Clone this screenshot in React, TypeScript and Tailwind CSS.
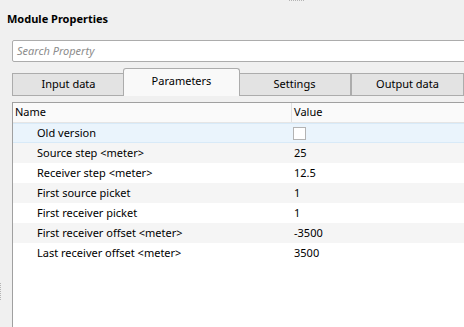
import React from 'react';

const rows = [
  { name: 'Old version', value: null },
  { name: 'Source step <meter>', value: '25' },
  { name: 'Receiver step <meter>', value: '12.5' },
  { name: 'First source picket', value: '1' },
  { name: 'First receiver picket', value: '1' },
  { name: 'First receiver offset <meter>', value: '-3500' },
  { name: 'Last receiver offset <meter>', value: '3500' },
];

const tabs = ['Input data', 'Parameters', 'Settings', 'Output data'];

export default function App() {
  return (
    <div className="relative w-[464px] h-[327px] overflow-hidden bg-[#f0f0f0] text-[11px] text-black font-['Noto_Sans',sans-serif]">
      {/* splitter grips */}
      <div className="absolute top-0 left-[289px] w-[15px] h-[2px] border-t border-dotted border-[#b5b5b5]" />
      <div className="absolute left-0 top-[283px] w-[2px] h-[17px] border-l border-dotted border-[#b5b5b5]" />

      {/* Title */}
      <div className="h-[40px] pl-[7px] pt-[11px] font-bold leading-[16px]">Module Properties</div>

      {/* Search */}
      <div className="ml-[12px] mr-[-6px] h-[22px] border border-[#acacac] rounded-[2px] bg-white flex items-center pl-[4px]">
        <span className="italic text-[#8c8c8c]">Search Property</span>
      </div>

      {/* Tabs */}
      <div className="mt-[7px] ml-[12px] h-[27px] flex items-end">
        {tabs.map((t, i) =>
          i === 1 ? (
            <div
              key={t}
              className="relative z-10 -mx-[2px] w-[117px] h-[28px] bg-[#f9f9f9] border border-b-0 border-[#acacac] rounded-t-[3px] flex items-center justify-center pb-[2px]"
            >
              {t}
            </div>
          ) : (
            <div
              key={t}
              className="w-[113px] h-[23px] shrink-0 bg-[#e3e3e3] border border-[#acacac] flex items-center justify-center"
            >
              {t}
            </div>
          )
        )}
      </div>

      {/* Table */}
      <div className="mt-[6px] ml-[12px] h-[300px] bg-white border-l border-t border-[#a0a0a0]">
        <div className="flex h-[20px] bg-[#fafafa] border-b border-[#e5e5e5] items-center">
          <div className="w-[279px] pl-[2px] border-r border-[#e0e0e0] h-full flex items-center">Name</div>
          <div className="pl-[2px]">Value</div>
        </div>
        {rows.map((r, i) => (
          <div
            key={r.name}
            className={`flex h-[20px] items-center ${
              i === 0 ? 'bg-[#eaf4fc] border-y border-[#d8eaf8]' : i % 2 === 1 ? 'bg-[#f5f5f5]' : 'bg-white'
            }`}
          >
            <div className="w-[281px] pl-[24px]">{r.name}</div>
            <div>
              {r.value === null ? (
                <div className="-ml-[1px] w-[13px] h-[13px] bg-white border border-[#b3b3b3]" />
              ) : (
                r.value
              )}
            </div>
          </div>
        ))}
      </div>
    </div>
  );
}
